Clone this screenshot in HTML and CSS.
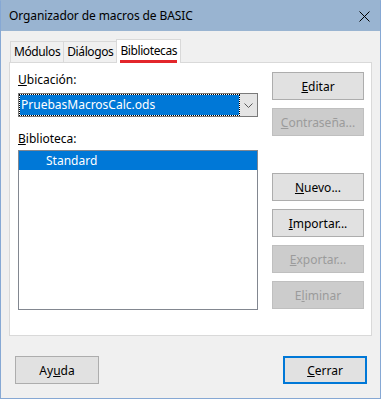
FILE: index.html
```html
<!DOCTYPE html>
<html lang="es">

<head>
    <meta charset="UTF-8">
    <meta name="viewport" content="width=device-width, initial-scale=1.0">
    <title>Organizador de macros de BASIC</title>
    <link rel="stylesheet" href="styles.css">
</head>

<body>
    <div class="window">
        <div class="titlebar">
            <span class="title">Organizador de macros de BASIC</span>
            <svg class="close" width="11" height="11" viewBox="0 0 11 11">
                <path d="M0.5 0.5 L10.5 10.5 M10.5 0.5 L0.5 10.5" stroke="#000" stroke-width="1" fill="none" />
            </svg>
        </div>

        <div class="content">
            <div class="tabs">
                <div class="tab">Módulos</div>
                <div class="tab">Diálogos</div>
                <div class="tab active"><span class="mark">Bibliotecas</span></div>
            </div>

            <div class="panel">
                <div class="left-col">
                    <div class="field-label"><u>U</u>bicación:</div>
                    <div class="combo">
                        <div class="combo-value">PruebasMacrosCalc.ods</div>
                        <div class="combo-btn">
                            <svg width="9" height="5" viewBox="0 0 9 5">
                                <path d="M0.5 0.5 L4.5 4.5 L8.5 0.5" stroke="#5a5a5a" stroke-width="1" fill="none" />
                            </svg>
                        </div>
                    </div>

                    <div class="field-label lib-label"><u>B</u>iblioteca:</div>
                    <div class="listbox">
                        <div class="list-item selected">Standard</div>
                    </div>
                </div>

                <div class="right-col">
                    <div class="btn-group">
                        <button class="btn"><u>E</u>ditar</button>
                        <button class="btn" disabled><u>C</u>ontraseña...</button>
                    </div>
                    <div class="btn-group">
                        <button class="btn"><u>N</u>uevo...</button>
                        <button class="btn"><u>I</u>mportar...</button>
                        <button class="btn" disabled><u>E</u>xportar...</button>
                        <button class="btn" disabled>E<u>l</u>iminar</button>
                    </div>
                </div>
            </div>

            <div class="footer">
                <button class="btn wide">Ay<u>u</u>da</button>
                <button class="btn wide default"><u>C</u>errar</button>
            </div>
        </div>
    </div>
</body>

</html>
```

FILE: styles.css
```css
body {
    margin: 0;
    padding: 0;
    font-family: "Noto Sans", "Open Sans", sans-serif;
    font-size: 12px;
    color: #000;
    background-color: #f0f0f0;
}

.window {
    width: 381px;
    height: 399px;
    box-sizing: border-box;
    border: 1px solid #86a8d4;
    border-top-color: #99b4d1;
    background-color: #f0f0f0;
}

.titlebar {
    height: 30px;
    display: flex;
    align-items: center;
    background-color: #99b4d1;
    padding-left: 8px;
}

.title {
    line-height: 30px;
    white-space: nowrap;
    letter-spacing: -0.1px;
}

.close {
    margin-left: auto;
    margin-right: 10px;
}

.content {
    padding: 8px 8px 0 8px;
}

/* tabs */
.tabs {
    display: flex;
    align-items: flex-end;
    height: 23px;
    padding-left: 1px;
}

.tab {
    height: 21px;
    box-sizing: border-box;
    border: 1px solid #d9d9d9;
    border-bottom: none;
    padding: 0 3px;
    line-height: 19px;
    white-space: nowrap;
    letter-spacing: -0.4px;
}

.tab + .tab {
    margin-left: -1px;
}

.tab.active {
    height: 24px;
    margin-bottom: -1px;
    background-color: #fff;
    position: relative;
    z-index: 1;
    padding-top: 1px;
}

.mark {
    display: inline-block;
    line-height: 18px;
    border-bottom: 3px solid #e3262b;
}

/* panel */
.panel {
    height: 274px;
    box-sizing: border-box;
    border: 1px solid #d9d9d9;
    background-color: #fff;
    display: flex;
    padding: 9px 7px 0 8px;
}

.left-col {
    width: 240px;
}

.field-label {
    line-height: 16px;
    height: 16px;
    margin-bottom: 5px;
}

.lib-label {
    margin-top: 14px;
    margin-bottom: 3px;
}

.combo {
    height: 24px;
    box-sizing: border-box;
    border: 1px solid #7a7a7a;
    display: flex;
    background-color: #fff;
}

.combo-value {
    flex: 1;
    border: 1px dotted #000;
    background-color: #0078d7;
    background-clip: padding-box;
    color: #fff;
    line-height: 20px;
    padding-left: 1px;
    white-space: nowrap;
}

.combo-btn {
    width: 17px;
    background-color: #e5e5e5;
    display: flex;
    align-items: center;
    justify-content: center;
}

.listbox {
    height: 160px;
    box-sizing: border-box;
    border: 1px solid #828790;
    background-color: #fff;
}

.list-item {
    height: 19px;
    line-height: 19px;
    padding-left: 27px;
}

.list-item.selected {
    background-color: #0078d7;
    color: #fff;
}

.right-col {
    margin-left: auto;
    width: 92px;
    display: flex;
    flex-direction: column;
    gap: 37px;
}

.btn-group {
    display: flex;
    flex-direction: column;
    gap: 8px;
}

/* buttons */
.btn {
    height: 28px;
    width: 92px;
    box-sizing: border-box;
    border: 1px solid #adadad;
    background-color: #e1e1e1;
    font-family: inherit;
    font-size: 12px;
    color: #000;
    padding: 0;
    margin: 0;
}

.btn:disabled {
    background-color: #cccccc;
    border-color: #bfbfbf;
    color: #9b9b9b;
}

.footer {
    display: flex;
    justify-content: space-between;
    margin-top: 20px;
    padding: 0 5px 0 6px;
}

.btn.wide {
    width: 84px;
}

.btn.default {
    border: 2px solid #0078d7;
}
```
